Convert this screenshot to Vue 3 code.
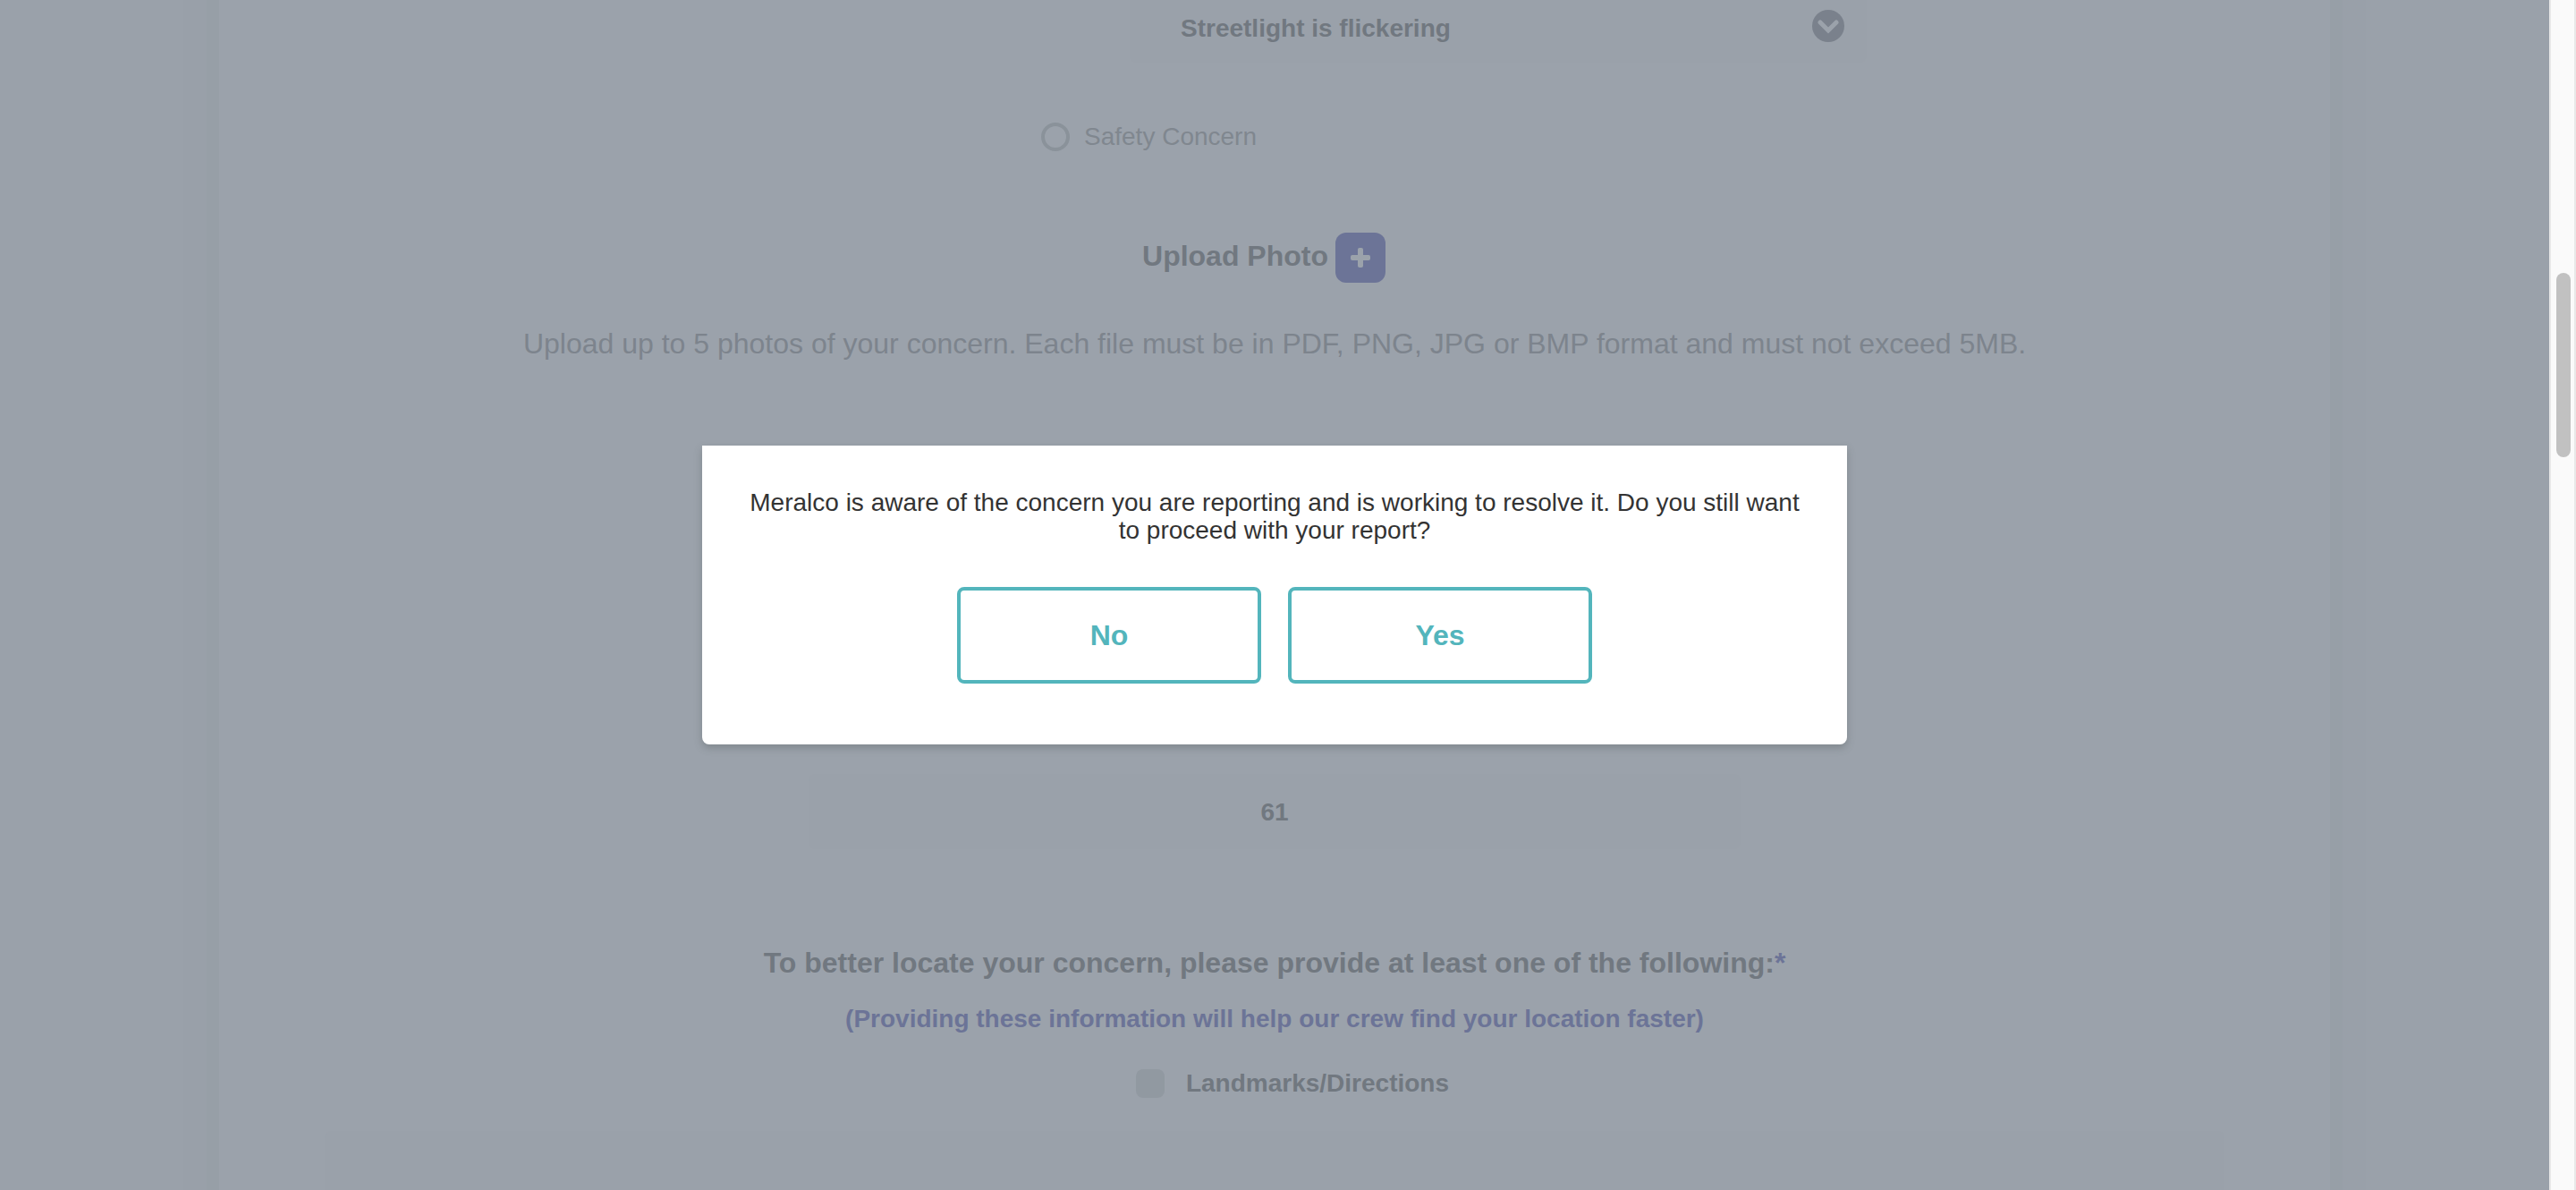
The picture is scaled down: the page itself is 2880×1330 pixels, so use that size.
<script setup>
import { ref } from 'vue'

const concern = ref('Streetlight is flickering')
const reference = ref('61')
const landmarks = ref('')
</script>

<template>
  <div class="viewport">
    <div class="page">
      <main class="card">
        <div class="select-wrap">
          <select v-model="concern" class="select" aria-label="Type of concern">
            <option>Streetlight is flickering</option>
          </select>
          <svg class="chevron" viewBox="0 0 36 36" aria-hidden="true">
            <circle cx="18" cy="18" r="18" />
            <path d="M9 14l9 9 9-9" />
          </svg>
        </div>

        <label class="radio-row">
          <input type="radio" name="category" class="radio" />
          <span>Safety Concern</span>
        </label>

        <div class="upload">
          <h2 class="heading">Upload Photo</h2>
          <button class="add" type="button" aria-label="Add photo">
            <svg viewBox="0 0 22 22" aria-hidden="true">
              <rect x="8" y="0" width="6" height="22" rx="2" />
              <rect x="0" y="8" width="22" height="6" rx="2" />
            </svg>
          </button>
        </div>
        <p class="hint">Upload up to 5 photos of your concern. Each file must be in PDF, PNG, JPG or BMP format and must not exceed 5MB.</p>

        <input v-model="reference" class="number" type="text" aria-label="Pole number" />

        <h2 class="heading">To better locate your concern, please provide at least one of the following:<span class="star">*</span></h2>
        <p class="note">(Providing these information will help our crew find your location faster)</p>
        <label class="check-row">
          <input type="checkbox" class="check" />
          <span>Landmarks/Directions</span>
        </label>
        <textarea v-model="landmarks" class="area" aria-label="Landmarks or directions"></textarea>
      </main>
      <div class="overlay">
        <section class="modal" role="dialog" aria-modal="true" aria-labelledby="message">
          <p id="message" class="message">Meralco is aware of the concern you are reporting and is working to resolve it. Do you still want to proceed with your report?</p>
          <div class="actions">
            <button class="choice" type="button">No</button>
            <button class="choice" type="button">Yes</button>
          </div>
        </section>
      </div>
    </div>
    <div class="scrollbar" aria-hidden="true"><div class="thumb"></div></div>
  </div>
</template>

<style>
body {
  overflow: hidden;
}
</style>

<style scoped>
.viewport {
  display: flex;
  height: 100vh;
  overflow: hidden;
  font-family: "Liberation Sans", Arial, sans-serif;
  font-size: 28px;
  color: #717880;
}
.viewport * {
  box-sizing: border-box;
}
.page {
  position: relative;
  flex: 1;
  overflow: hidden;
  background: #9aa1aa;
}
.card {
  display: flex;
  flex-direction: column;
  align-items: center;
  width: calc(100% - 490px);
  margin: 0 auto;
  background: #9ba2ab;
  box-shadow: 0 0 0 14px #979fa7, 0 0 0 40px #99a0a9;
}
.select-wrap {
  position: relative;
  width: 824px;
  margin: 0 0 0 500px;
}
.select {
  display: block;
  width: 100%;
  height: 70px;
  padding: 0 60px 8px 57px;
  appearance: none;
  border: 0;
  border-radius: 0 0 8px 8px;
  background: #9aa1aa;
  font: bold 28px "Liberation Sans", Arial, sans-serif;
  color: inherit;
}
.chevron {
  position: absolute;
  top: 11px;
  right: 25px;
  width: 36px;
  height: 36px;
  fill: #7a818c;
}
.chevron path {
  fill: none;
  stroke: #9ba2ab;
  stroke-width: 5;
  stroke-linecap: round;
}
.radio-row {
  display: flex;
  align-items: center;
  align-self: flex-start;
  gap: 16px;
  margin: 67px 0 0 919px;
  line-height: 32px;
  color: #80878f;
}
.radio {
  width: 32px;
  height: 32px;
  margin: 0;
  appearance: none;
  border: 4px solid #8a929a;
  border-radius: 50%;
}
.upload {
  display: flex;
  align-items: flex-start;
  gap: 8px;
  margin: 91px 24px 0 0;
}
.heading {
  margin: 0;
  font-size: 32px;
  line-height: 40px;
}
.upload .heading {
  line-height: 52px;
}
.add {
  display: grid;
  place-items: center;
  width: 56px;
  height: 56px;
  padding: 0;
  border: 0;
  border-radius: 12px;
  background: #6c7497;
}
.add svg {
  width: 22px;
  height: 22px;
  fill: #9ba2ab;
}
.hint {
  margin: 48px 0 0;
  font-size: 32px;
  line-height: 40px;
  color: #7d848d;
}
.number {
  width: 1042px;
  height: 84px;
  margin: 461px 0 107px;
  padding: 2px 0 0;
  border: 0;
  border-radius: 8px;
  background: #9aa1aa;
  font: bold 28px "Liberation Sans", Arial, sans-serif;
  text-align: center;
  color: inherit;
}
.star {
  color: #6c7497;
}
.note {
  margin: 27px 0 0;
  font-weight: bold;
  line-height: 32px;
  color: #6c7497;
}
.check-row {
  display: flex;
  align-items: center;
  gap: 24px;
  margin: 40px 0 0 40px;
  font-weight: bold;
  line-height: 32px;
}
.check {
  width: 32px;
  height: 32px;
  margin: 0;
  appearance: none;
  border-radius: 8px;
  background: #9199a1;
}
.area {
  width: 90%;
  height: 200px;
  margin: 37px 0 0;
  border: 0;
  border-radius: 8px;
  background: #9aa1aa;
  resize: none;
}
.overlay {
  position: absolute;
  inset: 0;
  display: grid;
  place-items: center;
}
.modal {
  width: 1280px;
  padding: 48px 48px 68px;
  border-radius: 0 0 8px 8px;
  background: #fff;
  box-shadow: 0 4px 8px rgba(80, 90, 90, 0.35);
  text-align: center;
}
.message {
  margin: 0 0 48px;
  line-height: 31px;
  color: #333;
}
.actions {
  display: flex;
  justify-content: center;
  gap: 30px;
}
.choice {
  width: 340px;
  height: 108px;
  padding: 0;
  border: 4px solid #53b5bc;
  border-radius: 8px;
  background: #fff;
  font: bold 32px "Liberation Sans", Arial, sans-serif;
  color: #53b5bc;
}
.scrollbar {
  width: 30px;
  padding: 305px 4px 0 6px;
  border: solid #e8e8e8;
  border-width: 0 2px;
  background: #fafafa;
}
.thumb {
  width: 16px;
  height: 206px;
  border-radius: 8px;
  background: #c1c1c1;
}
</style>
